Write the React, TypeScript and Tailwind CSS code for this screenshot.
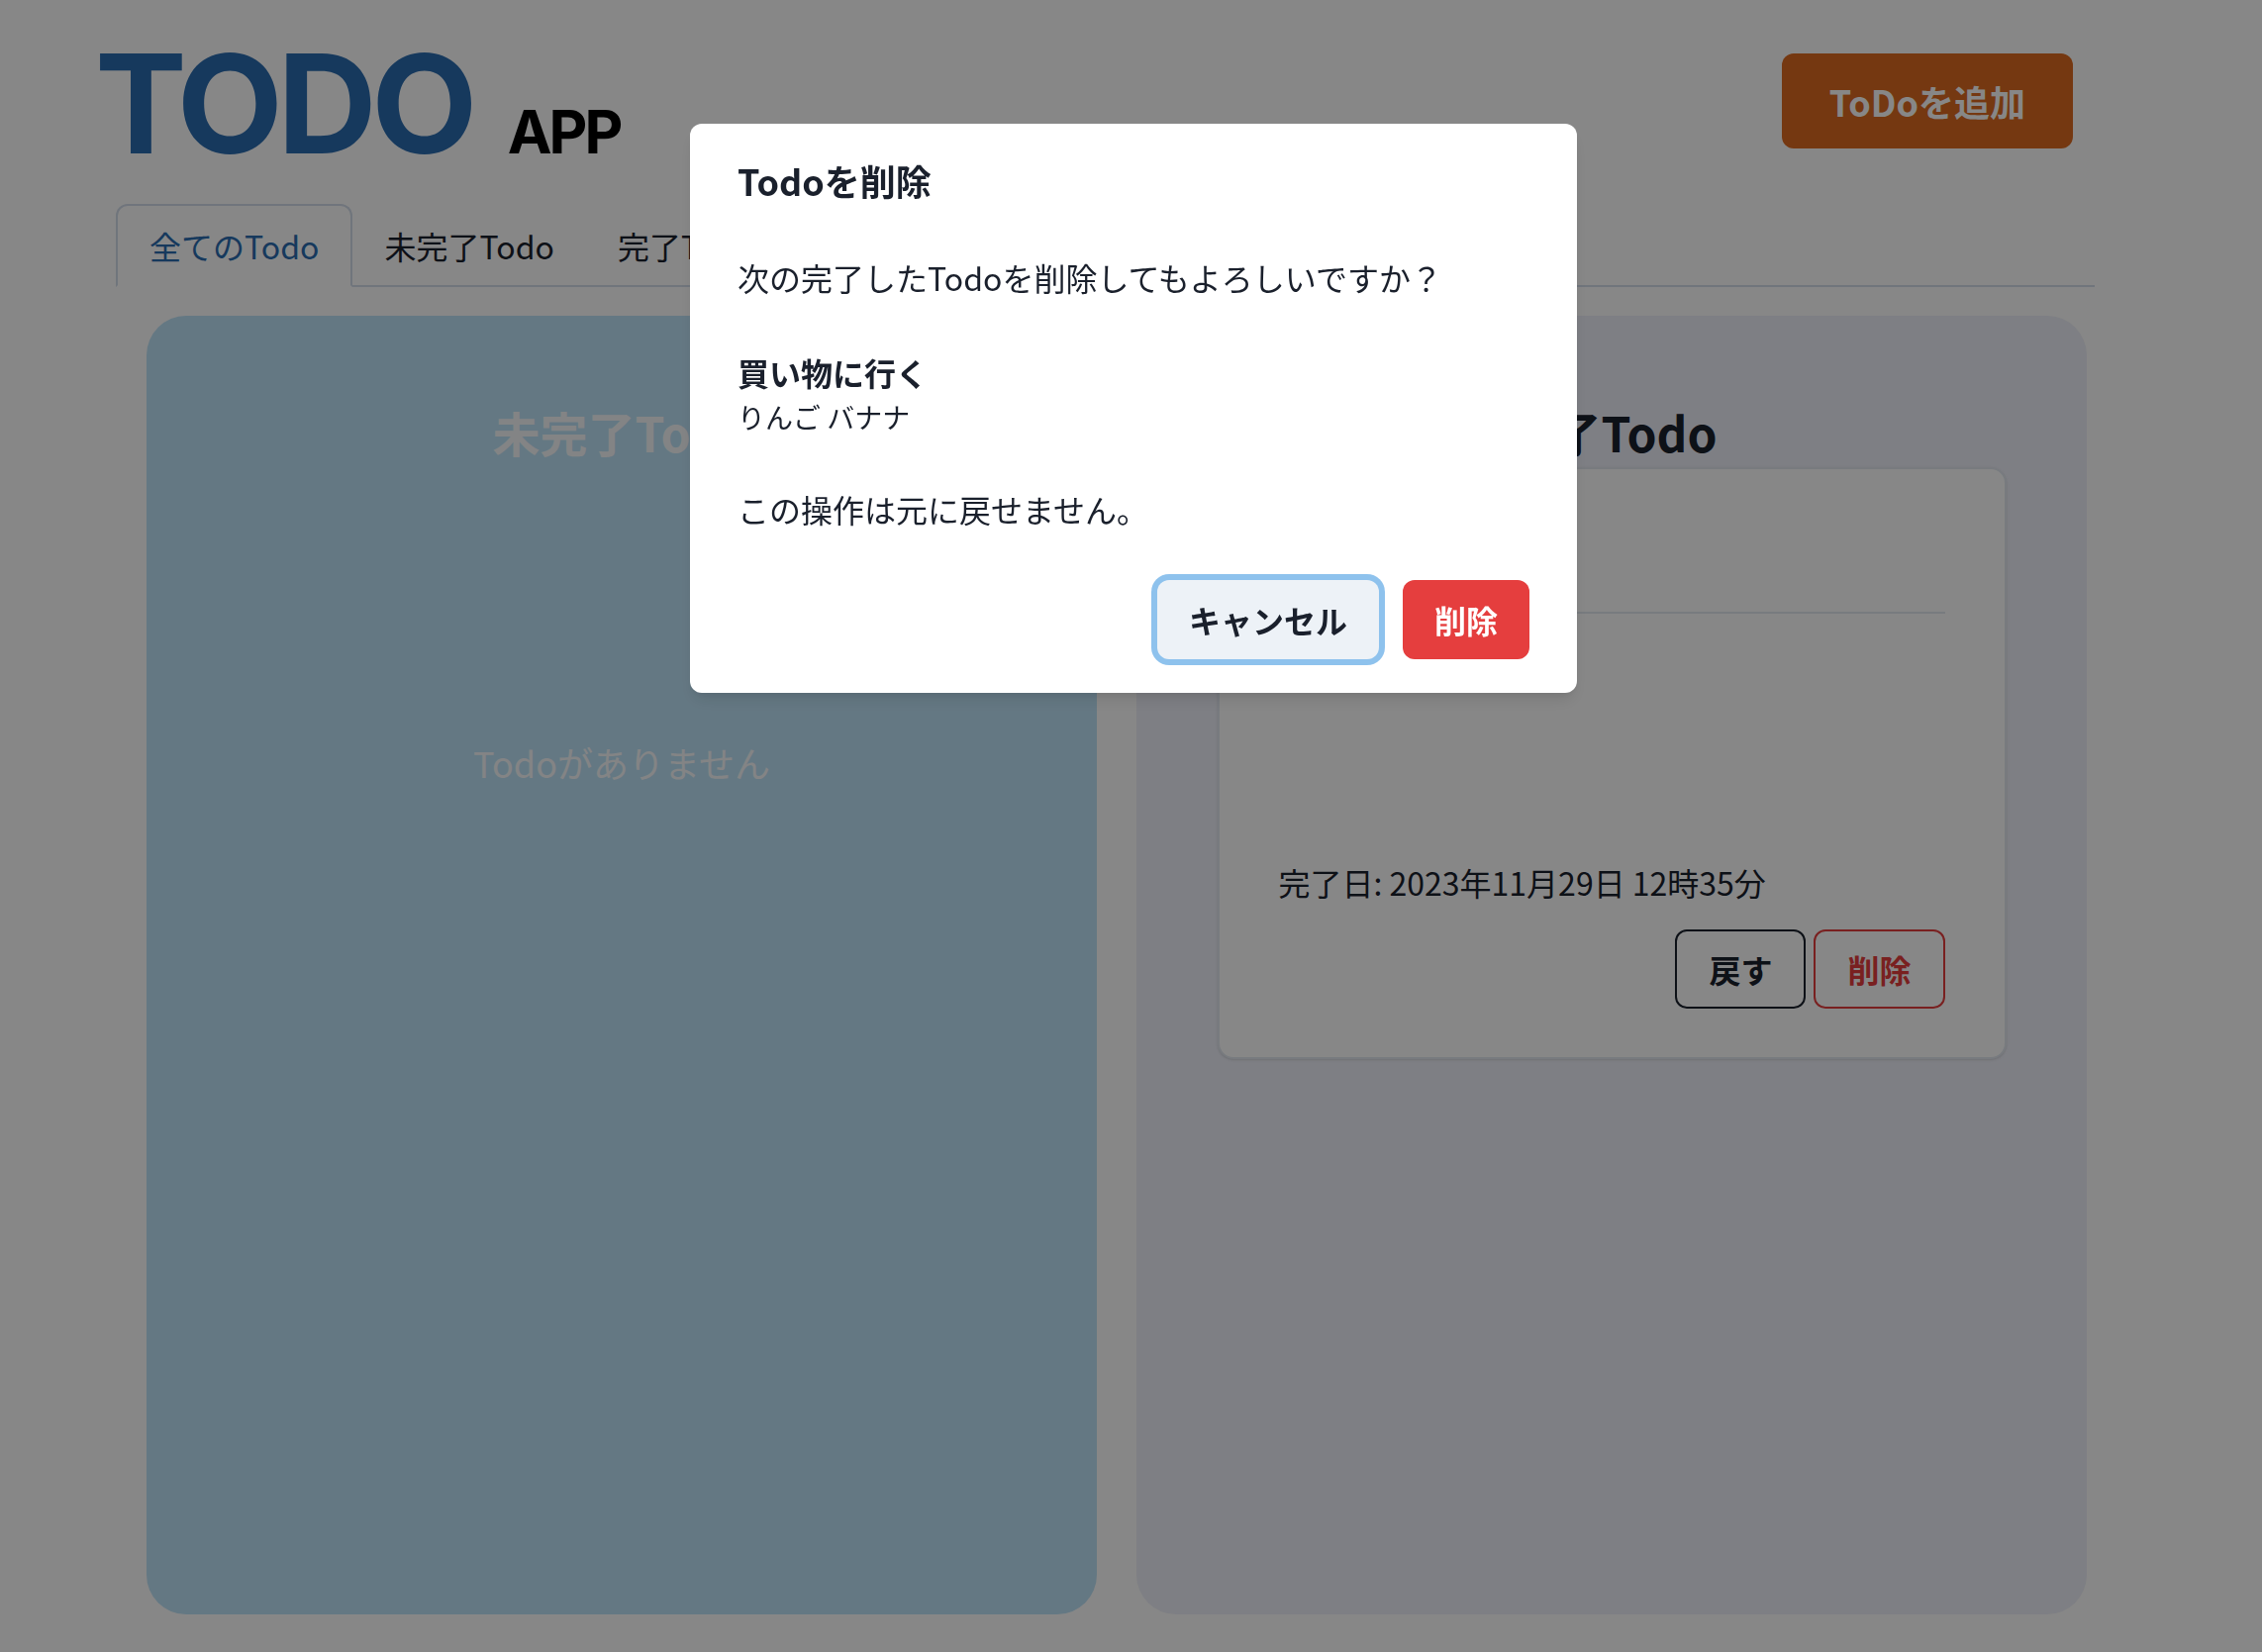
import React from "react";

function Tab({ selected, children }: { selected?: boolean; children: React.ReactNode }) {
  return selected ? (
    <div className="-mb-[2px] rounded-t-[12px] border-2 border-[#D3DDEB] border-b-white bg-white px-[32px] py-[16px] text-[32px] leading-[48px] text-[#2B6CB0]">
      {children}
    </div>
  ) : (
    <div className="-mb-[2px] border-2 border-transparent px-[30px] py-[16px] text-[32px] leading-[48px] text-[#1A202C]">
      {children}
    </div>
  );
}

export default function App() {
  return (
    <div className="relative min-h-screen overflow-hidden bg-white font-['Noto_Sans_CJK_JP',sans-serif] text-[#1A202C]">
      <header className="flex items-start justify-between pl-[96px] pr-[191px] pt-[35px]">
        <div className="flex items-baseline gap-[36px] font-['Inter','Noto_Sans_CJK_JP',sans-serif] font-bold">
          <h1 className="text-[139px] leading-none tracking-[-0.04em] text-[#2B6CB0]">TODO</h1>
          <span className="text-[60px] leading-none tracking-[-0.05em] text-black">APP</span>
        </div>
        <button className="mt-[19px] flex h-[96px] items-center rounded-[12px] bg-[#DD6B20] px-[48px] text-[36px] font-semibold leading-none text-white">
          ToDoを追加
        </button>
      </header>

      <div className="ml-[117px] mt-[32px] w-[1999px]">
        <div className="flex border-b-2 border-[#D3DDEB]">
          <Tab selected>全てのTodo</Tab>
          <Tab>未完了Todo</Tab>
          <Tab>完了Todo</Tab>
        </div>

        <div className="flex gap-[40px] pl-[31px] pt-[29px]">
          <section className="flex h-[1312px] w-[960px] shrink-0 flex-col items-center rounded-[40px] bg-[#BEE3F8] pt-[88px]">
            <h2 className="text-[48px] font-bold leading-[58px] text-[#F7FAFC]">未完了Todo</h2>
            <p className="mt-[278px] text-[36px] leading-[54px] text-[#F7FAFC]">Todoがありません</p>
          </section>

          <section className="flex h-[1312px] w-[960px] shrink-0 flex-col items-center rounded-[40px] bg-[#EEF0F9] pt-[88px]">
            <h2 className="text-[48px] font-bold leading-[58px] text-[#1A202C]">完了Todo</h2>
            <div className="mt-[7px] flex w-[797px] flex-col rounded-[16px] border-2 border-[#E2E8F0] bg-white shadow-sm">
              <div className="flex h-[144px] items-center px-[60px]">
                <h3 className="text-[40px] font-bold leading-[60px]">買い物に行く</h3>
              </div>
              <div className="mx-[60px] h-[2px] bg-[#E2E8F0]" />
              <div className="h-[247px]" />
              <p className="px-[60px] text-[32px] leading-[48px] text-[#1A202C]">完了日: 2023年11月29日 12時35分</p>
              <div className="mt-[24px] flex justify-end gap-[8px] px-[60px] pb-[49px]">
                <button className="flex h-[80px] items-center rounded-[12px] border-2 border-[#1A202C] px-[32px] text-[32px] font-semibold leading-none text-[#1A202C]">
                  戻す
                </button>
                <button className="flex h-[80px] items-center rounded-[12px] border-2 border-[#E53E3E] px-[32px] text-[32px] font-semibold leading-none text-[#E53E3E]">
                  削除
                </button>
              </div>
            </div>
          </section>
        </div>
      </div>

      <div className="fixed inset-0 bg-black/[0.47]" />

      <div className="fixed inset-0 flex items-start justify-center pl-[5px] pt-[125px]">
        <div className="w-[896px] rounded-[12px] bg-white shadow-[0_10px_15px_-3px_rgba(0,0,0,0.1),0_4px_6px_-2px_rgba(0,0,0,0.05)]">
          <h2 className="px-[48px] pb-[31px] pt-[30px] text-[36px] font-bold leading-[54px] text-[#1A202C]">Todoを削除</h2>
          <div className="px-[48px] py-[16px] text-[32px] leading-[48px] text-[#1A202C]">
            <p>次の完了したTodoを削除してもよろしいですか？</p>
            <div className="mt-[48px]">
              <p className="font-bold">買い物に行く</p>
              <p className="text-[28px] leading-[42px]">りんご バナナ</p>
            </div>
            <p className="mt-[48px]">この操作は元に戻せません。</p>
          </div>
          <div className="flex justify-end px-[48px] pb-[34px] pt-[32px]">
            <button className="flex h-[80px] items-center rounded-[12px] bg-[#EDF2F7] px-[32px] text-[32px] font-semibold leading-none text-[#1A202C] shadow-[0_0_0_6px_rgba(66,153,225,0.6)]">
              キャンセル
            </button>
            <button className="ml-[24px] flex h-[80px] items-center rounded-[12px] bg-[#E53E3E] px-[32px] text-[32px] font-semibold leading-none text-white">
              削除
            </button>
          </div>
        </div>
      </div>
    </div>
  );
}
